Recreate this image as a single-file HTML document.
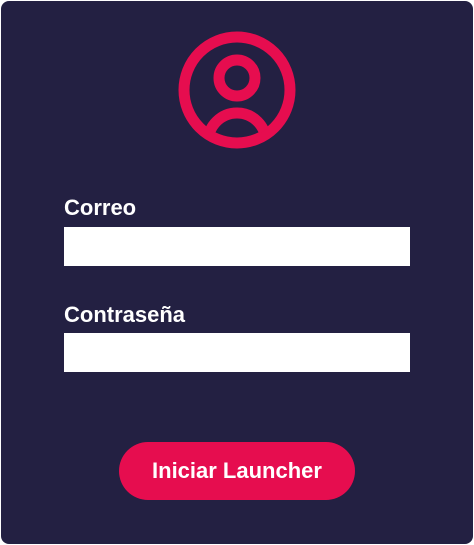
<!DOCTYPE html>
<html><head><meta charset="utf-8"><style>
html,body{margin:0;padding:0;background:#fff;width:474px;height:545px;overflow:hidden}
.p{position:absolute;left:1px;top:1px;width:472px;height:543px;background:#232042;border-radius:8px}
.l{position:absolute;left:64px;color:#fff;font:bold 22px "Liberation Sans",sans-serif}
.i{position:absolute;left:64px;width:346px;height:39px;background:#fff}
.b{position:absolute;left:119px;top:442px;width:236px;height:58px;border-radius:29px;background:#e60d4f;color:#fff;font:bold 22px "Liberation Sans",sans-serif;text-align:center;line-height:58px}
</style></head><body>
<div class="p"></div>
<svg style="position:absolute;left:0;top:0" width="474" height="545">
<defs><clipPath id="c"><circle cx="237" cy="90" r="49"/></clipPath></defs>
<circle cx="237" cy="90" r="53" fill="none" stroke="#e60d4f" stroke-width="11"/>
<circle cx="237" cy="78" r="18" fill="none" stroke="#e60d4f" stroke-width="11"/>
<circle cx="237" cy="142" r="29" fill="none" stroke="#e60d4f" stroke-width="11" clip-path="url(#c)"/>
</svg>
<div class="l" style="top:195px">Correo</div>
<div class="i" style="top:227px"></div>
<div class="l" style="top:302px">Contraseña</div>
<div class="i" style="top:333px"></div>
<div class="b">Iniciar Launcher</div>
</body></html>
